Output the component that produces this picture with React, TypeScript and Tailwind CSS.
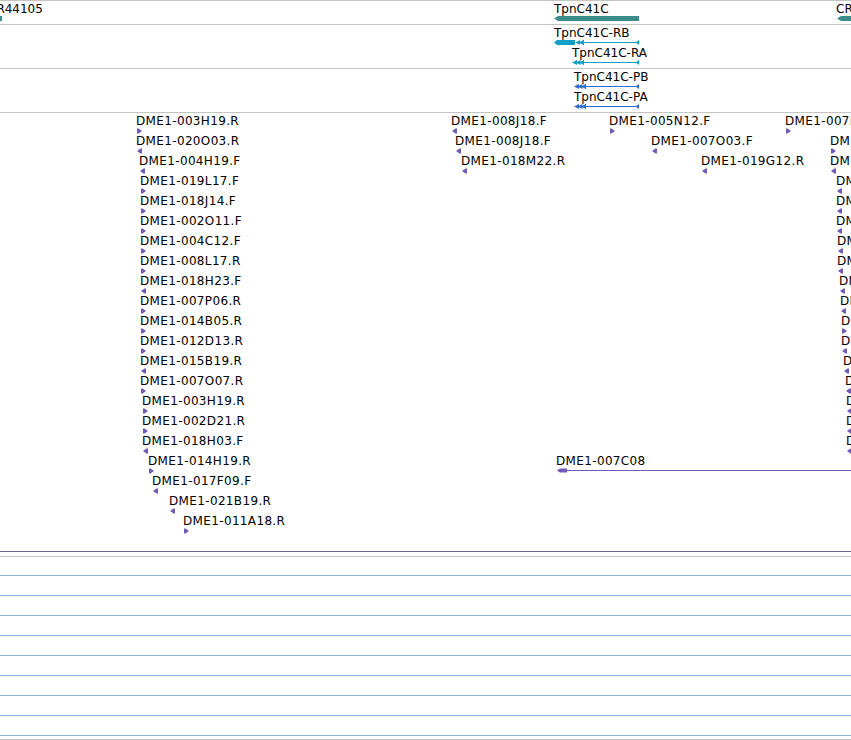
import React from 'react'

type Dir = 'l' | 'r'
type Est = { name: string; x: number; row: number; dir: Dir }

const GENE = '#3a8d8c'
const RNA = '#14a0c6'
const PROT = '#2e6bd0'
const EST = '#6f5ab4'

// EST track: one row every 20px, label above a tiny strand marker
const ESTS: Est[] = [
  { name: 'DME1-003H19.R', x: 136, row: 0, dir: 'r' },
  { name: 'DME1-020O03.R', x: 136, row: 1, dir: 'l' },
  { name: 'DME1-004H19.F', x: 139, row: 2, dir: 'l' },
  { name: 'DME1-019L17.F', x: 140, row: 3, dir: 'r' },
  { name: 'DME1-018J14.F', x: 140, row: 4, dir: 'r' },
  { name: 'DME1-002O11.F', x: 140, row: 5, dir: 'r' },
  { name: 'DME1-004C12.F', x: 140, row: 6, dir: 'r' },
  { name: 'DME1-008L17.R', x: 140, row: 7, dir: 'r' },
  { name: 'DME1-018H23.F', x: 140, row: 8, dir: 'l' },
  { name: 'DME1-007P06.R', x: 140, row: 9, dir: 'r' },
  { name: 'DME1-014B05.R', x: 140, row: 10, dir: 'r' },
  { name: 'DME1-012D13.R', x: 140, row: 11, dir: 'r' },
  { name: 'DME1-015B19.R', x: 140, row: 12, dir: 'l' },
  { name: 'DME1-007O07.R', x: 140, row: 13, dir: 'r' },
  { name: 'DME1-003H19.R', x: 142, row: 14, dir: 'r' },
  { name: 'DME1-002D21.R', x: 142, row: 15, dir: 'r' },
  { name: 'DME1-018H03.F', x: 142, row: 16, dir: 'l' },
  { name: 'DME1-014H19.R', x: 148, row: 17, dir: 'r' },
  { name: 'DME1-017F09.F', x: 152, row: 18, dir: 'l' },
  { name: 'DME1-021B19.R', x: 169, row: 19, dir: 'l' },
  { name: 'DME1-011A18.R', x: 183, row: 20, dir: 'r' },

  { name: 'DME1-008J18.F', x: 451, row: 0, dir: 'l' },
  { name: 'DME1-008J18.F', x: 455, row: 1, dir: 'l' },
  { name: 'DME1-018M22.R', x: 461, row: 2, dir: 'l' },
  { name: 'DME1-005N12.F', x: 609, row: 0, dir: 'r' },
  { name: 'DME1-007O03.F', x: 651, row: 1, dir: 'l' },
  { name: 'DME1-019G12.R', x: 701, row: 2, dir: 'l' },

  { name: 'DME1-007N05.F', x: 785, row: 0, dir: 'r' },
  { name: 'DME1-016E21.R', x: 830, row: 1, dir: 'r' },
  { name: 'DME1-011C09.F', x: 830, row: 2, dir: 'l' },
  { name: 'DME1-009A14.R', x: 836, row: 3, dir: 'l' },
  { name: 'DME1-013G02.R', x: 836, row: 4, dir: 'l' },
  { name: 'DME1-020K11.F', x: 836, row: 5, dir: 'l' },
  { name: 'DME1-004B16.R', x: 837, row: 6, dir: 'l' },
  { name: 'DME1-010H08.R', x: 837, row: 7, dir: 'l' },
  { name: 'DME1-017D03.F', x: 839, row: 8, dir: 'l' },
  { name: 'DME1-006M21.R', x: 840, row: 9, dir: 'l' },
  { name: 'DME1-012P10.F', x: 841, row: 10, dir: 'r' },
  { name: 'DME1-003E05.R', x: 841, row: 11, dir: 'l' },
  { name: 'DME1-019C22.R', x: 843, row: 12, dir: 'l' },
  { name: 'DME1-008F17.F', x: 845, row: 13, dir: 'l' },
  { name: 'DME1-015L04.R', x: 846, row: 14, dir: 'l' },
  { name: 'DME1-001N19.R', x: 846, row: 15, dir: 'l' },
  { name: 'DME1-021J06.F', x: 846, row: 16, dir: 'l' },
]

const Label = ({ x, y, wide, children }: { x: number; y: number; wide?: boolean; children: React.ReactNode }) => (
  <div
    className={`absolute whitespace-nowrap text-[12px] leading-[14px] text-black ${wide ? 'tracking-[0.35px]' : ''}`}
    style={{ left: x, top: y }}
  >
    {children}
  </div>
)

const Rule = ({ color }: { color: string }) => <div className="h-px shrink-0" style={{ backgroundColor: color }} />

// left-pointing arrowhead, tip at x
const leftTri = (x: number, cy: number, w = 4, h = 5) =>
  `${x},${cy} ${x + w},${cy - h / 2} ${x + w},${cy + h / 2}`

/** spliced transcript: cluster of small exons at the left, intron line, tiny exon at the right */
function Transcript({ start, cy, color, thickEnd }: { start: number; cy: number; color: string; thickEnd?: number }) {
  const from = thickEnd ?? start
  const lineFrom = from + (thickEnd ? 8 : 11)
  return (
    <g fill={color}>
      {thickEnd && (
        <polygon points={`${start},${cy} ${start + 3},${cy - 2.5} ${thickEnd},${cy - 2.5} ${thickEnd},${cy + 2.5} ${start + 3},${cy + 2.5}`} />
      )}
      <polygon points={leftTri(from, cy, 5)} />
      <polygon points={leftTri(from + 3.5, cy, 5)} />
      {!thickEnd && <polygon points={leftTri(from + 7, cy, 5)} />}
      <rect x={lineFrom} y={cy - 2.5} width={1} height={5} />
      <rect x={lineFrom} y={cy - 0.5} width={637 - lineFrom} height={1} />
      <polygon points={leftTri(635.5, cy, 3.5, 5)} />
    </g>
  )
}

export default function App() {
  return (
    <div className="flex h-[740px] w-full flex-col overflow-hidden bg-white font-['DejaVu_Sans',sans-serif]">
      <Rule color="#c4c4c4" />

      {/* genes */}
      <div className="relative h-[23px] shrink-0">
        <svg className="absolute inset-0" width="851" height="23">
          <rect x={0} y={15} width={2} height={5} fill={GENE} />
          <polygon points="554,17.5 558,15 639,15 639,20 558,20" fill={GENE} />
          <polygon points="837,17.5 841,15 851,15 851,20 841,20" fill={GENE} />
        </svg>
        <Label x={-12} y={1}>CR44105</Label>
        <Label x={554} y={1}>TpnC41C</Label>
        <Label x={836} y={1}>CR43614</Label>
      </div>
      <Rule color="#c4c4c4" />

      {/* mRNAs */}
      <div className="relative h-[43px] shrink-0">
        <svg className="absolute inset-0" width="851" height="43">
          <Transcript start={554} thickEnd={575} cy={17.5} color={RNA} />
          <Transcript start={572} cy={37.5} color={RNA} />
        </svg>
        <Label x={554} y={1}>TpnC41C-RB</Label>
        <Label x={572} y={21}>TpnC41C-RA</Label>
      </div>
      <Rule color="#c4c4c4" />

      {/* proteins */}
      <div className="relative h-[43px] shrink-0">
        <svg className="absolute inset-0" width="851" height="43">
          <Transcript start={574} cy={17.5} color={PROT} />
          <Transcript start={574} cy={37.5} color={PROT} />
        </svg>
        <Label x={574} y={1}>TpnC41C-PB</Label>
        <Label x={574} y={21}>TpnC41C-PA</Label>
      </div>
      <Rule color="#c4c4c4" />

      {/* ESTs */}
      <div className="relative h-[438px] shrink-0">
        <svg className="absolute inset-0" width="851" height="438">
          <g fill={EST}>
            {ESTS.map((e, i) => {
              const x = e.x + 1
              const y = 15.5 + e.row * 20
              const pts =
                e.dir === 'r'
                  ? `${x},${y} ${x + 1.5},${y} ${x + 5},${y + 2.5} ${x + 1.5},${y + 5} ${x},${y + 5}`
                  : `${x},${y + 2.5} ${x + 3.5},${y} ${x + 5},${y} ${x + 5},${y + 5} ${x + 3.5},${y + 5}`
              return <polygon key={i} points={pts} />
            })}
            <polygon points="557,357.5 560,355.5 567,355.5 567,359.5 560,359.5" />
            <rect x={567} y={357} width={284} height={1} />
          </g>
        </svg>
        {ESTS.map((e, i) => (
          <Label key={i} x={e.x} y={1 + e.row * 20} wide>
            {e.name}
          </Label>
        ))}
        <Label x={556} y={341} wide>
          DME1-007C08
        </Label>
      </div>
      <Rule color="#6c6598" />
      <div className="h-[4px] shrink-0" />
      <Rule color="#c4c4c4" />
      <div className="h-[18px] shrink-0" />
      {Array.from({ length: 8 }).map((_, i) => (
        <React.Fragment key={i}>
          <Rule color="#8cb6d6" />
          <div className="h-[19px] shrink-0" />
        </React.Fragment>
      ))}
      <Rule color="#8cb6d6" />
      <div className="h-[3px] shrink-0" />
      <Rule color="#c4c4c4" />
    </div>
  )
}
